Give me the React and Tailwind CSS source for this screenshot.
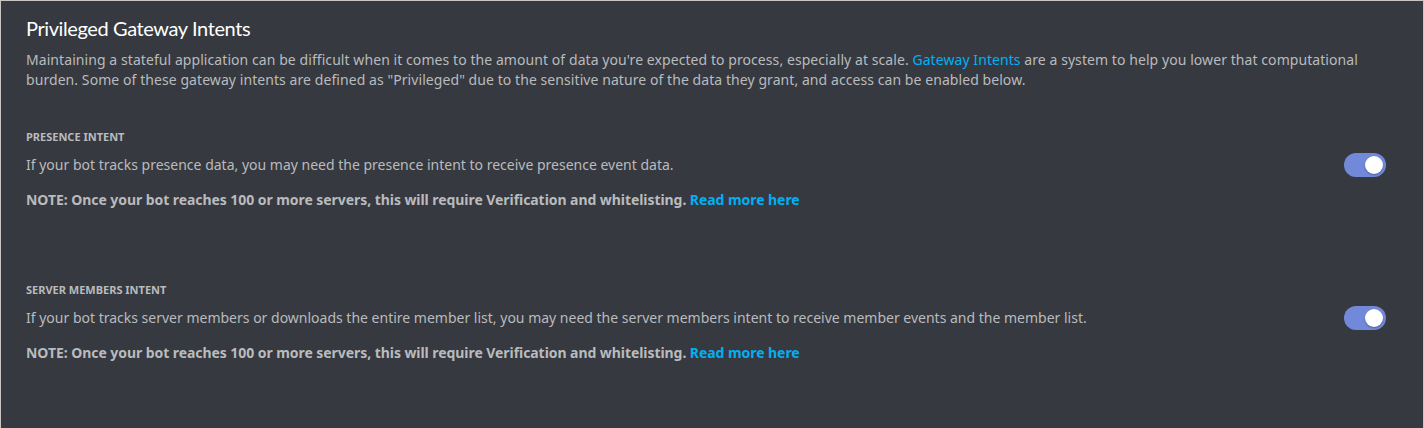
import React from "react";

function Toggle() {
  return (
    <div className="relative w-[42px] h-[24px] rounded-full bg-[#7289da] shrink-0">
      <div className="absolute right-[3px] top-[3px] w-[18px] h-[18px] rounded-full bg-white shadow-[0_1px_2px_rgba(0,0,0,0.3)]" />
    </div>
  );
}

function Intent({ title, desc }) {
  return (
    <div className="flex flex-col">
      <div className="text-[11px] font-bold uppercase text-[#b9bbbe] leading-[16px]">{title}</div>
      <div className="flex items-start justify-between mt-[8px]">
        <div className="mt-[2px] text-[14px] leading-[20px] text-[#b9bbbe]">{desc}</div>
        <Toggle />
      </div>
      <div className="mt-[13px] text-[14px] leading-[20px] font-bold text-[#b9bbbe] tracking-[-0.06px]">
        NOTE: Once your bot reaches 100 or more servers, this will require Verification and whitelisting.{" "}
        <span className="text-[#00b0f4]">Read more here</span>
      </div>
    </div>
  );
}

export default function App() {
  return (
    <div
      className="w-[1424px] h-[428px] bg-[#36393f] border-t border-l border-r border-[#c9c5c0] pl-[25px] pr-[37px] pt-[15px]"
      style={{ fontFamily: '"Noto Sans", "Open Sans", sans-serif' }}
    >
      <div
        className="text-[20px] leading-[24px] text-white tracking-[-0.4px]"
        style={{ fontFamily: 'Lato, "Noto Sans", sans-serif' }}
      >
        Privileged Gateway Intents
      </div>
      <div className="mt-[10px] text-[14px] leading-[20px] text-[#b9bbbe] tracking-[0.07px]">
        Maintaining a stateful application can be difficult when it comes to the amount of data you're expected to process, especially at scale.{" "}
        <span className="text-[#00b0f4]">Gateway Intents</span> are a system to help you lower that computational burden. Some of these gateway intents are defined as "Privileged" due to the sensitive nature of the data they grant, and access can be enabled below.
      </div>
      <div className="mt-[39px] flex flex-col gap-[72px]">
        <Intent
          title="Presence Intent"
          desc="If your bot tracks presence data, you may need the presence intent to receive presence event data."
        />
        <Intent
          title="Server Members Intent"
          desc="If your bot tracks server members or downloads the entire member list, you may need the server members intent to receive member events and the member list."
        />
      </div>
    </div>
  );
}
